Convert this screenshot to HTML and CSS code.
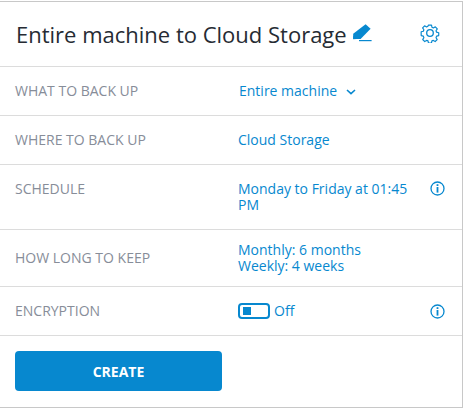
FILE: index.html
```html
<!DOCTYPE html>
<html lang="en">

<head>
  <meta charset="UTF-8">
  <meta name="viewport" content="width=device-width, initial-scale=1.0">
  <title>Backup plan</title>
  <link rel="stylesheet" href="styles.css">
</head>

<body>
  <div class="panel">
    <header class="panel-head">
      <h1 class="panel-title">Entire machine to Cloud Storage</h1>
      <svg class="icon-edit" width="20" height="20" viewBox="0 0 20 20">
        <path d="M13.6 1.2l5 4.6L8.6 16H1.2v-5.2z" fill="#0788cf" />
        <path d="M1.2 16.2l3.6-.1-3.6-3.4z" fill="#0788cf" />
        <rect x="7" y="17" width="12.6" height="1.2" fill="#0788cf" />
      </svg>
      <svg class="icon-gear" width="20" height="20" viewBox="0 0 20 20" fill="none" stroke="#0788cf" stroke-width="1.3" stroke-linejoin="round">
        <path d="M8.3 1.2h3.4l.5 2.5 1.5.7 2.2-1.3 2.2 2.4-1.4 2 .6 1.6 2.4.6v3.2l-2.4.6-.6 1.6 1.3 2.1-2.3 2.3-2-1.3-1.6.6-.5 2.4H8.3l-.5-2.4-1.6-.6-2 1.3-2.3-2.3 1.3-2.1-.6-1.6-2.4-.6V8.6l2.4-.6.6-1.6-1.4-2 2.2-2.4 2.2 1.3 1.5-.7z" transform="translate(1 1) scale(.9)" />
        <circle cx="10" cy="10" r="3.3" />
      </svg>
    </header>

    <div class="row row-what">
      <div class="row-label">WHAT TO BACK UP</div>
      <div class="row-value">
        Entire machine
        <svg class="icon-chevron" width="10" height="6" viewBox="0 0 10 6" fill="none" stroke="#0788cf" stroke-width="1.6">
          <path d="M1 1l4 3.6L9 1" />
        </svg>
      </div>
    </div>

    <div class="row">
      <div class="row-label">WHERE TO BACK UP</div>
      <div class="row-value">Cloud Storage</div>
    </div>

    <div class="row row-schedule">
      <div class="row-label">SCHEDULE</div>
      <div class="row-value">Monday to Friday at 01:45 PM</div>
      <svg class="icon-info" width="15" height="15" viewBox="0 0 15 15">
        <circle cx="7.5" cy="7.5" r="6.5" fill="none" stroke="#0788cf" stroke-width="1.3" />
        <rect x="6.6" y="3.2" width="1.8" height="1.8" fill="#0788cf" />
        <rect x="6.6" y="6" width="1.8" height="5.6" fill="#0788cf" />
      </svg>
    </div>

    <div class="row row-keep">
      <div class="row-label">HOW LONG TO KEEP</div>
      <div class="row-value">Monthly: 6 months<br>Weekly: 4 weeks</div>
    </div>

    <div class="row">
      <div class="row-label">ENCRYPTION</div>
      <div class="row-value toggle-wrap">
        <span class="toggle"><span class="toggle-knob"></span></span>
        Off
      </div>
      <svg class="icon-info" width="15" height="15" viewBox="0 0 15 15">
        <circle cx="7.5" cy="7.5" r="6.5" fill="none" stroke="#0788cf" stroke-width="1.3" />
        <rect x="6.6" y="3.2" width="1.8" height="1.8" fill="#0788cf" />
        <rect x="6.6" y="6" width="1.8" height="5.6" fill="#0788cf" />
      </svg>
    </div>

    <div class="panel-foot">
      <button class="btn-create">CREATE</button>
    </div>
  </div>
</body>

</html>
```

FILE: styles.css
```css
* {
  margin: 0;
  padding: 0;
  box-sizing: border-box;
}

body {
  background-color: #fff;
  font-family: "Open Sans", sans-serif;
  overflow: hidden;
}

.panel {
  width: 463px;
  height: 407px;
  margin-top: 1px;
  border-top: 1px solid #c8c8c8;
  border-right: 1px solid #c8c8c8;
  border-bottom: 1px solid #c8c8c8;
}

.panel-head {
  display: flex;
  align-items: center;
  height: 65px;
  padding: 0 22px 0 16px;
  border-bottom: 1px solid #dcdcdc;
}

.panel-title {
  font-size: 22px;
  font-weight: 400;
  line-height: 30px;
  color: #262b33;
}

.icon-edit {
  margin: -2px 0 0 5px;
}

.icon-gear {
  margin: -2px 0 0 auto;
}

.row {
  display: flex;
  align-items: center;
  height: 49px;
  padding: 0 15px;
  border-bottom: 1px solid #dcdcdc;
  font-size: 14px;
  line-height: 16px;
}

.row-schedule {
  align-items: flex-start;
  height: 65px;
  padding-top: 16px;
}

.row-keep {
  height: 57px;
}

.row-label {
  flex: 0 0 223px;
  color: #878d99;
}

.row-value {
  flex: 1;
  color: #0788cf;
}

.row-what .row-value {
  padding-left: 1px;
}

.icon-chevron {
  margin: 0 0 1px 5px;
}

.icon-info {
  flex: none;
  margin-left: 12px;
  margin-right: 2px;
}

.toggle-wrap {
  display: flex;
  align-items: center;
}

.toggle {
  display: flex;
  align-items: center;
  width: 32px;
  height: 16px;
  margin-right: 4px;
  padding-left: 3px;
  border: 2px solid #0788cf;
  border-radius: 4px;
}

.toggle-knob {
  width: 8px;
  height: 8px;
  background-color: #0788cf;
}

.panel-foot {
  padding: 15px;
}

.btn-create {
  display: block;
  width: 207px;
  height: 40px;
  border: 0;
  border-radius: 4px;
  background-color: #0788cf;
  color: #fff;
  font-family: "Open Sans", sans-serif;
  font-size: 14px;
  font-weight: 700;
}
```
